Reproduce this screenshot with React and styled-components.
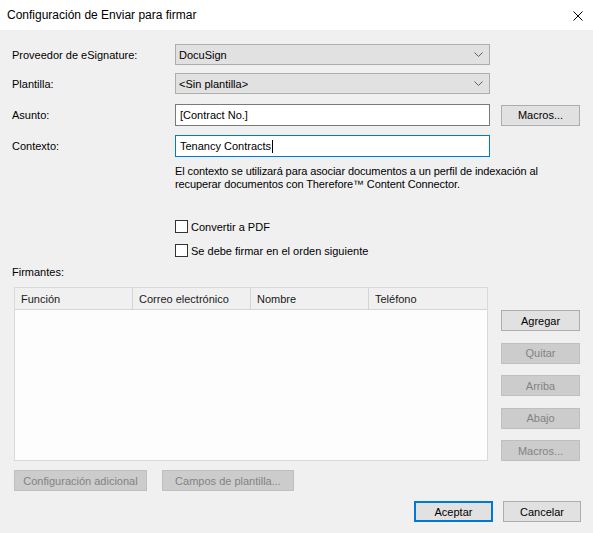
import React from "react";
import styled, { createGlobalStyle } from "styled-components";

const GlobalStyle = createGlobalStyle`
	html, body {
		margin: 0;
		padding: 0;
		background: #f0f0f0;
	}
	body {
		font-family: "Liberation Sans", Arial, sans-serif;
		font-size: 11px;
		color: #000;
	}
`;

function Caret() {
	return (
		<svg width="9" height="5" viewBox="0 0 9 5">
			<path d="M0.5 0.5 L4.5 4.5 L8.5 0.5" fill="none" stroke="#606060" strokeWidth="1" />
		</svg>
	);
}

function CloseIcon() {
	return (
		<svg width="10" height="10" viewBox="0 0 10 10">
			<path d="M0.5 0.5 L9.5 9.5 M9.5 0.5 L0.5 9.5" stroke="#000" strokeWidth="1" />
		</svg>
	);
}

const columns = ["Función", "Correo electrónico", "Nombre", "Teléfono"];
const sideButtons = [
	{ label: "Agregar", disabled: false },
	{ label: "Quitar", disabled: true },
	{ label: "Arriba", disabled: true },
	{ label: "Abajo", disabled: true },
	{ label: "Macros...", disabled: true },
];

function App() {
	return (
		<>
			<GlobalStyle />
			<Window>
				<TitleBar>
					<Title>Configuración de Enviar para firmar</Title>
					<CloseButton>
						<CloseIcon />
					</CloseButton>
				</TitleBar>
				<Body>
					<FormRow $top={14}>
						<Label>Proveedor de eSignature:</Label>
						<Select>
							<span>DocuSign</span>
							<Caret />
						</Select>
					</FormRow>
					<FormRow $top={8}>
						<Label>Plantilla:</Label>
						<Select>
							<span>&lt;Sin plantilla&gt;</span>
							<Caret />
						</Select>
					</FormRow>
					<FormRow $top={10}>
						<Label>Asunto:</Label>
						<Edit>[Contract No.]</Edit>
						<Button>Macros...</Button>
					</FormRow>
					<FormRow $top={9}>
						<Label>Contexto:</Label>
						<Edit $focused>
							Tenancy Contracts<Cursor />
						</Edit>
					</FormRow>
					<Hint>
						El contexto se utilizará para asociar documentos a un perfil de indexación al
						<br />
						recuperar documentos con Therefore™ Content Connector.
					</Hint>
					<CheckRow $top={29}>
						<CheckBox />
						<span>Convertir a PDF</span>
					</CheckRow>
					<CheckRow $top={11}>
						<CheckBox />
						<span>Se debe firmar en el orden siguiente</span>
					</CheckRow>
					<SectionLabel>Firmantes:</SectionLabel>
					<SignersArea>
						<Table>
							<HeaderRow>
								{columns.map((c) => (
									<HeaderCell key={c}>{c}</HeaderCell>
								))}
							</HeaderRow>
						</Table>
						<SideButtons>
							{sideButtons.map((b) => (
								<Button key={b.label} disabled={b.disabled}>
									{b.label}
								</Button>
							))}
						</SideButtons>
					</SignersArea>
					<ExtraRow>
						<Button disabled $width={133}>
							Configuración adicional
						</Button>
						<Button disabled $width={132}>
							Campos de plantilla...
						</Button>
					</ExtraRow>
					<Footer>
						<Button $default>Aceptar</Button>
						<Button $width={78}>Cancelar</Button>
					</Footer>
				</Body>
			</Window>
		</>
	);
}

export default App;

const Window = styled.div`
	width: 593px;
	height: 533px;
	display: flex;
	flex-direction: column;
	background: #f0f0f0;
	overflow: hidden;
`;

const TitleBar = styled.div`
	height: 30px;
	flex: none;
	background: #fff;
	display: flex;
	align-items: center;
	justify-content: space-between;
	padding: 0 10px 0 7px;
`;

const Title = styled.div`
	font-size: 12px;
	color: #000;
	margin-top: -1px;
`;

const CloseButton = styled.div`
	display: flex;
	align-items: center;
	padding-top: 1px;
`;

const Body = styled.div`
	display: flex;
	flex-direction: column;
	padding: 0 12px 0 12px;
`;

const FormRow = styled.div`
	display: flex;
	align-items: center;
	margin-top: ${(p) => p.$top}px;
`;

const Label = styled.div`
	width: 163px;
	flex: none;
`;

const Select = styled.div`
	width: 315px;
	height: 21px;
	box-sizing: border-box;
	background: #e1e1e1;
	border: 1px solid #adadad;
	display: flex;
	align-items: center;
	justify-content: space-between;
	padding: 0 6px 0 3px;
`;

const Edit = styled.div`
	width: 315px;
	height: 22px;
	box-sizing: border-box;
	background: #fff;
	border: 1px solid ${(p) => (p.$focused ? "#0078d7" : "#7a7a7a")};
	display: flex;
	align-items: center;
	padding: 0 4px;
`;

const Cursor = styled.span`
	display: inline-block;
	width: 1px;
	height: 13px;
	background: #000;
	margin-left: 1px;
`;

const Button = styled.div`
	width: ${(p) => p.$width || 79}px;
	height: 21px;
	box-sizing: border-box;
	flex: none;
	display: flex;
	align-items: center;
	justify-content: center;
	background: ${(p) => (p.disabled ? "#cccccc" : "#e1e1e1")};
	border: ${(p) =>
		p.$default ? "2px solid #0078d7" : `1px solid ${p.disabled ? "#bfbfbf" : "#adadad"}`};
	color: ${(p) => (p.disabled ? "#838383" : "#000")};
	${FormRow} & {
		margin-left: 11px;
	}
`;

const Hint = styled.div`
	margin: 8px 0 0 163px;
	line-height: 13px;
	font-size: 11px;
	letter-spacing: -0.1px;
`;

const CheckRow = styled.div`
	display: flex;
	align-items: center;
	gap: 3px;
	margin: ${(p) => p.$top}px 0 0 163px;
	height: 13px;
`;

const CheckBox = styled.div`
	width: 13px;
	height: 13px;
	box-sizing: border-box;
	border: 1px solid #333;
	background: #fff;
`;

const SectionLabel = styled.div`
	margin-top: 9px;
	line-height: 13px;
`;

const SignersArea = styled.div`
	display: flex;
	align-items: flex-start;
	margin-top: 8px;
`;

const Table = styled.div`
	margin-left: 2px;
	width: 474px;
	height: 174px;
	box-sizing: border-box;
	border: 1px solid #d9d9d9;
	background: #fdfdfd;
`;

const HeaderRow = styled.div`
	display: grid;
	grid-template-columns: 118px 118px 118px 1fr;
	height: 21px;
	background: #f0f0f0;
	border-bottom: 1px solid #d5d5d5;
`;

const HeaderCell = styled.div`
	display: flex;
	align-items: center;
	padding-left: 6px;
	border-right: 1px solid #d5d5d5;
	color: #1a1a1a;

	&:last-child {
		border-right: none;
	}
`;

const SideButtons = styled.div`
	display: flex;
	flex-direction: column;
	gap: 11.5px;
	margin: 23px 0 0 13px;
`;

const ExtraRow = styled.div`
	display: flex;
	gap: 15px;
	margin: 9px 0 0 2px;
`;

const Footer = styled.div`
	display: flex;
	justify-content: flex-end;
	gap: 10px;
	margin-top: 10px;
	padding-right: 0;
`;
